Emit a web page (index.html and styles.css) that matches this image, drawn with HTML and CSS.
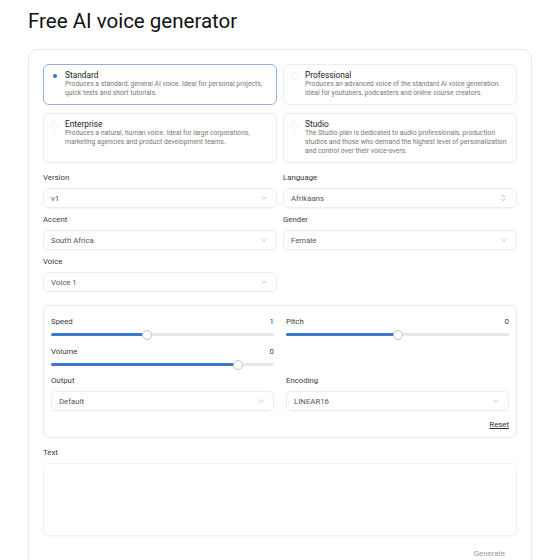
FILE: index.html
```html
<!DOCTYPE html>
<html lang="en">
<head>
<meta charset="utf-8">
<title>Free AI voice generator</title>
<link rel="stylesheet" href="styles.css">
</head>
<body>
<h1 class="title">Free AI voice generator</h1>
<div class="panel">
  <div class="plans">
    <div class="plan selected">
      <span class="radio"><span class="dot"></span></span>
      <div class="plan-body">
        <div class="plan-name">Standard</div>
        <div class="plan-desc">Produces a standard, general AI voice. Ideal for personal projects, quick tests and short tutorials.</div>
      </div>
    </div>
    <div class="plan">
      <span class="radio"></span>
      <div class="plan-body">
        <div class="plan-name">Professional</div>
        <div class="plan-desc">Produces an advanced voice of the standard AI voice generation. Ideal for youtubers, podcasters and online course creators.</div>
      </div>
    </div>
    <div class="plan">
      <span class="radio"></span>
      <div class="plan-body">
        <div class="plan-name">Enterprise</div>
        <div class="plan-desc">Produces a natural, human voice. Ideal for large corporations, marketing agencies and product development teams.</div>
      </div>
    </div>
    <div class="plan">
      <span class="radio"></span>
      <div class="plan-body">
        <div class="plan-name">Studio</div>
        <div class="plan-desc">The Studio plan is dedicated to audio professionals, production studios and those who demand the highest level of personalization and control over their voice-overs.</div>
      </div>
    </div>
  </div>

  <div class="fields">
    <div class="field">
      <div class="label">Version</div>
      <div class="select"><span>v1</span><svg class="chev" viewBox="0 0 10 6" width="6" height="4"><path d="M1 1l4 4 4-4" fill="none" stroke="#b5b5b5" stroke-width="1.2"/></svg></div>
    </div>
    <div class="field">
      <div class="label">Language</div>
      <div class="select"><span>Afrikaans</span><svg class="updown" viewBox="0 0 8 12" width="5" height="8"><path d="M1 4.5l3-3 3 3M1 7.5l3 3 3-3" fill="none" stroke="#9a9a9a" stroke-width="1.1"/></svg></div>
    </div>
    <div class="field">
      <div class="label">Accent</div>
      <div class="select"><span>South Africa</span><svg class="chev" viewBox="0 0 10 6" width="6" height="4"><path d="M1 1l4 4 4-4" fill="none" stroke="#b5b5b5" stroke-width="1.2"/></svg></div>
    </div>
    <div class="field">
      <div class="label">Gender</div>
      <div class="select"><span>Female</span><svg class="chev" viewBox="0 0 10 6" width="6" height="4"><path d="M1 1l4 4 4-4" fill="none" stroke="#b5b5b5" stroke-width="1.2"/></svg></div>
    </div>
    <div class="field">
      <div class="label">Voice</div>
      <div class="select"><span>Voice 1</span><svg class="chev" viewBox="0 0 10 6" width="6" height="4"><path d="M1 1l4 4 4-4" fill="none" stroke="#b5b5b5" stroke-width="1.2"/></svg></div>
    </div>
  </div>

  <div class="settings">
    <div class="slider-block">
      <div class="slider-head"><span>Speed</span><span>1</span></div>
      <div class="track"><div class="fill" style="width:43%"></div><span class="thumb" style="left:43%"></span></div>
    </div>
    <div class="slider-block">
      <div class="slider-head"><span>Pitch</span><span>0</span></div>
      <div class="track"><div class="fill" style="width:50%"></div><span class="thumb" style="left:50%"></span></div>
    </div>
    <div class="slider-block volume">
      <div class="slider-head"><span>Volume</span><span>0</span></div>
      <div class="track"><div class="fill" style="width:84%"></div><span class="thumb" style="left:84%"></span></div>
    </div>
    <div></div>
    <div class="field">
      <div class="label">Output</div>
      <div class="select"><span>Default</span><svg class="chev" viewBox="0 0 10 6" width="6" height="4"><path d="M1 1l4 4 4-4" fill="none" stroke="#b5b5b5" stroke-width="1.2"/></svg></div>
    </div>
    <div class="field">
      <div class="label">Encoding</div>
      <div class="select"><span>LINEAR16</span><svg class="chev" viewBox="0 0 10 6" width="6" height="4"><path d="M1 1l4 4 4-4" fill="none" stroke="#b5b5b5" stroke-width="1.2"/></svg></div>
    </div>
    <div></div>
    <div class="reset-row"><a class="reset">Reset</a></div>
  </div>

  <div class="text-field">
    <div class="label">Text</div>
    <div class="textarea"></div>
  </div>

  <div class="actions"><button class="generate">Generate</button></div>
</div>
</body>
</html>
```
FILE: styles.css
```css
* { box-sizing: border-box; }
html, body { margin: 0; padding: 0; background: #fff; }
body {
  font-family: Roboto, "Liberation Sans", sans-serif;
  color: #222;
  padding: 0 28px;
}
.title {
  margin: 0;
  padding-top: 8px;
  font-size: 20.5px;
  font-weight: 400;
  line-height: 26px;
  color: #111;
}
.panel {
  margin-top: 15px;
  width: 504px;
  border: 1px solid #e9e9e9;
  border-radius: 9px;
  padding: 14px 14px 0 14px;
  height: 520px;
}
.plans {
  display: grid;
  grid-template-columns: 234px 234px;
  column-gap: 6px;
  row-gap: 8px;
}
.plan {
  display: flex;
  gap: 6px;
  border: 1px solid #ececec;
  border-radius: 6px;
  padding: 5px 7px 6px 7px;
}
.plan.selected {
  border-color: #92b3d6;
}
.radio {
  flex: none;
  width: 8px;
  height: 8px;
  margin-top: 2px;
  border-radius: 50%;
  border: 1px solid #f0f0f0;
  display: flex;
  align-items: center;
  justify-content: center;
}
.selected .radio { border-color: #fff; }
.dot {
  width: 4px;
  height: 4px;
  border-radius: 50%;
  background: #3f72c4;
}
.plan-name {
  font-size: 8.3px;
  line-height: 10px;
  color: #222;
}
.plan-desc {
  font-size: 6.8px;
  line-height: 9px;
  color: #777;
}

.fields {
  margin-top: 10px;
  display: grid;
  grid-template-columns: 234px 234px;
  column-gap: 6px;
  row-gap: 7px;
}
.label {
  font-size: 7.8px;
  line-height: 10px;
  color: #3a3a3a;
  margin-bottom: 5px;
}
.select {
  height: 20px;
  border: 1px solid #ececec;
  border-radius: 5px;
  display: flex;
  align-items: center;
  justify-content: space-between;
  padding: 0 9px 0 7px;
  font-size: 7.8px;
  color: #555;
  box-shadow: 0 1px 1px rgba(0,0,0,0.03);
}
.chev { display: block; }
.updown { display: block; margin-right: 1px; }

.settings {
  margin-top: 13px;
  border: 1px solid #e9e9e9;
  border-radius: 6px;
  padding: 11px 7px 7px 7px;
  display: grid;
  grid-template-columns: 223px 223px;
  column-gap: 12px;
  row-gap: 7px;
}
.slider-block.volume { margin-top: 1px; }
.slider-head {
  display: flex;
  justify-content: space-between;
  font-size: 7.8px;
  line-height: 10px;
  color: #3a3a3a;
}
.track {
  position: relative;
  margin-top: 2px;
  height: 10px;
  display: flex;
  align-items: center;
}
.track::before {
  content: "";
  position: absolute;
  left: 0; right: 0;
  top: 4px;
  height: 3px;
  border-radius: 2px;
  background: #e8e8e8;
}
.fill {
  position: relative;
  height: 3px;
  border-radius: 2px;
  background: #3b78cf;
}
.thumb {
  position: absolute;
  top: 0.5px;
  width: 10px;
  height: 10px;
  margin-left: -5px;
  border-radius: 50%;
  background: #fff;
  border: 1px solid #b9c4d2;
}
.reset-row {
  display: flex;
  justify-content: flex-end;
  margin-top: 2px;
}
.reset {
  font-size: 7.8px;
  line-height: 10px;
  color: #333;
  text-decoration: underline;
}

.text-field { margin-top: 10px; }
.textarea {
  height: 73px;
  border: 1px solid #f3f3f3;
  border-radius: 5px;
  box-shadow: 0 1px 2px rgba(0,0,0,0.04);
}
.actions {
  display: flex;
  justify-content: flex-end;
  margin-top: 13px;
}
.generate {
  font-family: inherit;
  font-size: 7.8px;
  color: #999;
  background: none;
  border: none;
  padding: 0 12px;
  line-height: 10px;
}
```
